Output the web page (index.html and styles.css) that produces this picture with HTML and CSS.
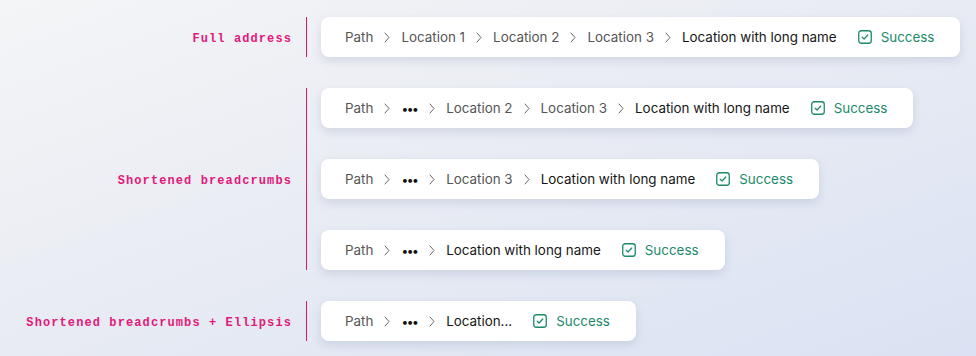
FILE: index.html
```html
<!DOCTYPE html>
<html lang="en">

<head>
    <meta charset="UTF-8">
    <meta name="viewport" content="width=device-width, initial-scale=1.0">
    <title>Breadcrumbs</title>
    <link rel="stylesheet" href="styles.css">
</head>

<body>
    <div class="board">
        <div class="label">Full address</div>
        <div class="group">
            <div class="crumbs">
                <span class="item">Path</span>
                <svg class="sep" width="6" height="11" viewBox="0 0 6 11"><path d="M1 1 L5 5.5 L1 10" /></svg>
                <span class="item">Location 1</span>
                <svg class="sep" width="6" height="11" viewBox="0 0 6 11"><path d="M1 1 L5 5.5 L1 10" /></svg>
                <span class="item">Location 2</span>
                <svg class="sep" width="6" height="11" viewBox="0 0 6 11"><path d="M1 1 L5 5.5 L1 10" /></svg>
                <span class="item">Location 3</span>
                <svg class="sep" width="6" height="11" viewBox="0 0 6 11"><path d="M1 1 L5 5.5 L1 10" /></svg>
                <span class="item current">Location with long name</span>
                <span class="status"><svg width="14" height="14" viewBox="0 0 14 14"><rect x="0.75" y="0.75" width="12.5" height="12.5" rx="2.5" fill="none" stroke="#1b8a6b" stroke-width="1.3"/><path d="M4.2 7.2 L6.1 9 L9.8 5" fill="none" stroke="#1b8a6b" stroke-width="1.2" stroke-linecap="round" stroke-linejoin="round"/></svg>Success</span>
            </div>
        </div>

        <div class="label">Shortened breadcrumbs</div>
        <div class="group">
            <div class="crumbs">
                <span class="item">Path</span>
                <svg class="sep" width="6" height="11" viewBox="0 0 6 11"><path d="M1 1 L5 5.5 L1 10" /></svg>
                <span class="dots">&bull;&bull;&bull;</span>
                <svg class="sep" width="6" height="11" viewBox="0 0 6 11"><path d="M1 1 L5 5.5 L1 10" /></svg>
                <span class="item">Location 2</span>
                <svg class="sep" width="6" height="11" viewBox="0 0 6 11"><path d="M1 1 L5 5.5 L1 10" /></svg>
                <span class="item">Location 3</span>
                <svg class="sep" width="6" height="11" viewBox="0 0 6 11"><path d="M1 1 L5 5.5 L1 10" /></svg>
                <span class="item current">Location with long name</span>
                <span class="status"><svg width="14" height="14" viewBox="0 0 14 14"><rect x="0.75" y="0.75" width="12.5" height="12.5" rx="2.5" fill="none" stroke="#1b8a6b" stroke-width="1.3"/><path d="M4.2 7.2 L6.1 9 L9.8 5" fill="none" stroke="#1b8a6b" stroke-width="1.2" stroke-linecap="round" stroke-linejoin="round"/></svg>Success</span>
            </div>
            <div class="crumbs">
                <span class="item">Path</span>
                <svg class="sep" width="6" height="11" viewBox="0 0 6 11"><path d="M1 1 L5 5.5 L1 10" /></svg>
                <span class="dots">&bull;&bull;&bull;</span>
                <svg class="sep" width="6" height="11" viewBox="0 0 6 11"><path d="M1 1 L5 5.5 L1 10" /></svg>
                <span class="item">Location 3</span>
                <svg class="sep" width="6" height="11" viewBox="0 0 6 11"><path d="M1 1 L5 5.5 L1 10" /></svg>
                <span class="item current">Location with long name</span>
                <span class="status"><svg width="14" height="14" viewBox="0 0 14 14"><rect x="0.75" y="0.75" width="12.5" height="12.5" rx="2.5" fill="none" stroke="#1b8a6b" stroke-width="1.3"/><path d="M4.2 7.2 L6.1 9 L9.8 5" fill="none" stroke="#1b8a6b" stroke-width="1.2" stroke-linecap="round" stroke-linejoin="round"/></svg>Success</span>
            </div>
            <div class="crumbs">
                <span class="item">Path</span>
                <svg class="sep" width="6" height="11" viewBox="0 0 6 11"><path d="M1 1 L5 5.5 L1 10" /></svg>
                <span class="dots">&bull;&bull;&bull;</span>
                <svg class="sep" width="6" height="11" viewBox="0 0 6 11"><path d="M1 1 L5 5.5 L1 10" /></svg>
                <span class="item current">Location with long name</span>
                <span class="status"><svg width="14" height="14" viewBox="0 0 14 14"><rect x="0.75" y="0.75" width="12.5" height="12.5" rx="2.5" fill="none" stroke="#1b8a6b" stroke-width="1.3"/><path d="M4.2 7.2 L6.1 9 L9.8 5" fill="none" stroke="#1b8a6b" stroke-width="1.2" stroke-linecap="round" stroke-linejoin="round"/></svg>Success</span>
            </div>
        </div>

        <div class="label">Shortened breadcrumbs + Ellipsis</div>
        <div class="group">
            <div class="crumbs">
                <span class="item">Path</span>
                <svg class="sep" width="6" height="11" viewBox="0 0 6 11"><path d="M1 1 L5 5.5 L1 10" /></svg>
                <span class="dots">&bull;&bull;&bull;</span>
                <svg class="sep" width="6" height="11" viewBox="0 0 6 11"><path d="M1 1 L5 5.5 L1 10" /></svg>
                <span class="item current">Location...</span>
                <span class="status"><svg width="14" height="14" viewBox="0 0 14 14"><rect x="0.75" y="0.75" width="12.5" height="12.5" rx="2.5" fill="none" stroke="#1b8a6b" stroke-width="1.3"/><path d="M4.2 7.2 L6.1 9 L9.8 5" fill="none" stroke="#1b8a6b" stroke-width="1.2" stroke-linecap="round" stroke-linejoin="round"/></svg>Success</span>
            </div>
        </div>
    </div>
</body>

</html>
```

FILE: styles.css
```css
body {
    margin: 0;
    height: 356px;
    overflow: hidden;
    font-family: Inter, "Noto Sans", sans-serif;
    background: linear-gradient(160deg, #f4f5f7 0%, #e9ecf3 45%, #dae2f3 100%);
}

.board {
    display: grid;
    grid-template-columns: 306px 1fr;
    row-gap: 31px;
    padding-top: 17px;
}

.label {
    align-self: center;
    margin-top: 4px;
    text-align: right;
    padding-right: 14px;
    font-family: "Liberation Mono", "DejaVu Sans Mono", monospace;
    font-weight: bold;
    font-size: 12px;
    letter-spacing: 1.1px;
    color: #e0197a;
}

.group {
    border-left: 1px solid #d41a6f;
    padding-left: 14px;
    display: flex;
    flex-direction: column;
    align-items: flex-start;
    gap: 31px;
}

.crumbs {
    height: 40px;
    box-sizing: border-box;
    display: flex;
    align-items: center;
    gap: 11px;
    padding: 0 26px 0 24px;
    background: #fff;
    border-radius: 8px;
    box-shadow: 0 4px 10px rgba(120, 130, 170, 0.22);
    font-size: 13.4px;
    white-space: nowrap;
}

.item {
    color: #555;
}

.item.current {
    color: #161616;
}

.sep {
    fill: none;
    stroke: #666;
    stroke-width: 1;
    stroke-linecap: round;
    stroke-linejoin: round;
}

.dots {
    color: #111;
    font-size: 12px;
    letter-spacing: -1.5px;
    padding-right: 1px;
}

.status {
    display: flex;
    align-items: center;
    gap: 9px;
    margin-left: 10px;
    color: #1b8a6b;
}
```
